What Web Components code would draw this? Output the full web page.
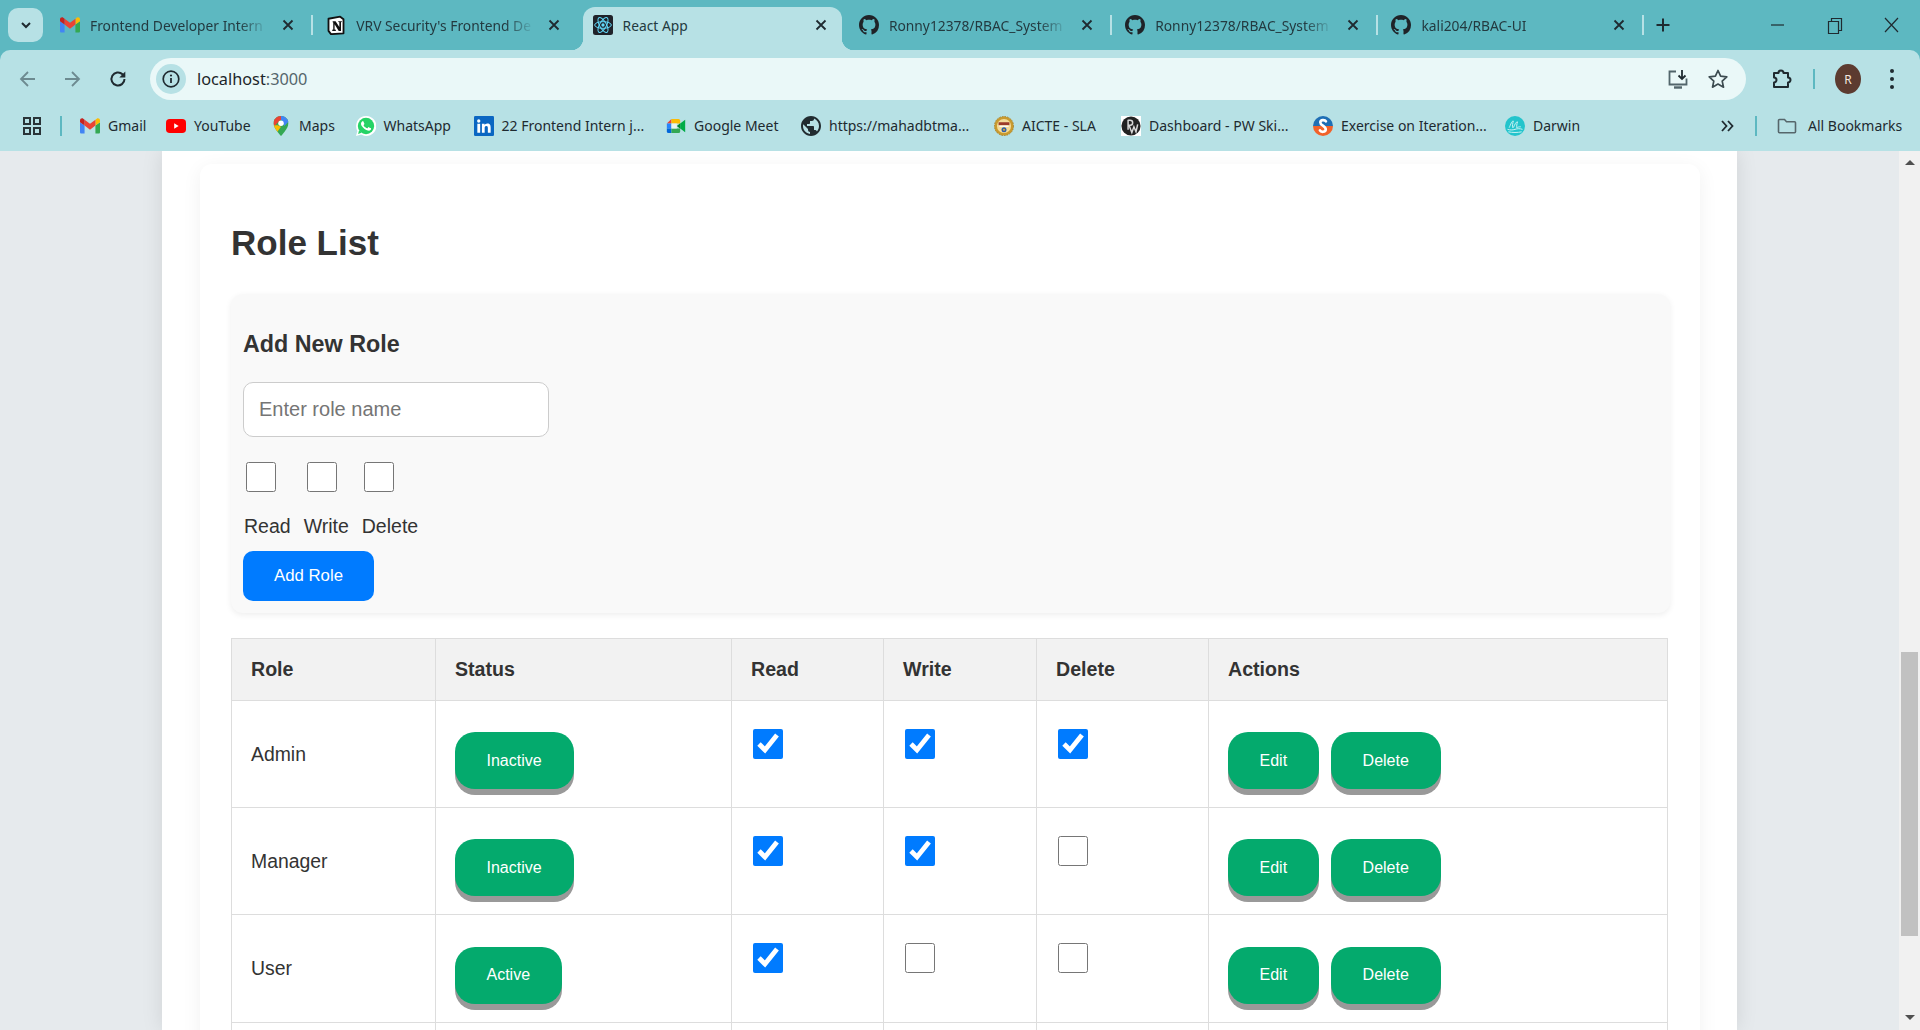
<!DOCTYPE html>
<html lang="en">
<head>
<meta charset="utf-8">
<title>React App</title>
<style>
	html, body { margin: 0; height: 100%; overflow: hidden; }
	body { display: flex; flex-direction: column; font-family: "Liberation Sans", Arial, sans-serif; color: #333; background: #e6eaed; }
</style>
</head>
<body>
<browser-chrome>
	<chrome-tab icon="gmail" label="Frontend Developer Intern" sep></chrome-tab>
	<chrome-tab icon="notion" label="VRV Security's Frontend De"></chrome-tab>
	<chrome-tab icon="react" label="React App" active></chrome-tab>
	<chrome-tab icon="github" label="Ronny12378/RBAC_System" sep></chrome-tab>
	<chrome-tab icon="github" label="Ronny12378/RBAC_System" sep></chrome-tab>
	<chrome-tab icon="github" label="kali204/RBAC-UI" sep></chrome-tab>
	<bookmark-item slot="bookmarks" icon="gmail" w="86">Gmail</bookmark-item>
	<bookmark-item slot="bookmarks" icon="youtube" w="105">YouTube</bookmark-item>
	<bookmark-item slot="bookmarks" icon="maps" w="84.5">Maps</bookmark-item>
	<bookmark-item slot="bookmarks" icon="whatsapp" w="118">WhatsApp</bookmark-item>
	<bookmark-item slot="bookmarks" icon="linkedin" w="192.5">22 Frontend Intern j...</bookmark-item>
	<bookmark-item slot="bookmarks" icon="meet" w="135">Google Meet</bookmark-item>
	<bookmark-item slot="bookmarks" icon="globe" w="193">https://mahadbtma...</bookmark-item>
	<bookmark-item slot="bookmarks" icon="aicte" w="127">AICTE - SLA</bookmark-item>
	<bookmark-item slot="bookmarks" icon="pw" w="192">Dashboard - PW Ski...</bookmark-item>
	<bookmark-item slot="bookmarks" icon="scaler" w="192">Exercise on Iteration...</bookmark-item>
	<bookmark-item slot="bookmarks" icon="darwin" w="100">Darwin</bookmark-item>
</browser-chrome>
<page-area>
	<role-page>
		<role-form></role-form>
		<role-table></role-table>
	</role-page>
</page-area>

<script>
const ICONS = {
	gmail: `<svg viewBox="0 -2 24 22"><path fill="#4285f4" d="M1.6 18H5.5V8.5L0 4.4V16.4C0 17.3.7 18 1.6 18z"/><path fill="#34a853" d="M18.5 18h3.9c.9 0 1.6-.7 1.6-1.6V4.4L18.5 8.5z"/><path fill="#fbbc04" d="M18.5 1.4v7.1L24 4.4V2.2C24 .2 21.700-1 20.100.2z"/><path fill="#ea4335" d="M5.500 8.500V1.400L12 6.300l6.500-4.900v7.100L12 13.400z"/><path fill="#c5221f" d="M0 2.200v2.200l5.500 4.100V1.400L3.900.2C2.300-1 0 .2 0 2.200z"/></svg>`,
	notion: `<svg viewBox="0 0 24 24"><path fill="#fff" stroke="#111" stroke-width="2.200" stroke-linejoin="round" d="M3 4.500 17 2l4 3v17l-15 1-3-4z"/><path fill="#111" d="M8 7.500h3.500l4.500 7v-5.800l-1.300-.2V7.500h4.300v1l-1 .2v10.500h-2.700l-5-8v6.200l1.500.3v1.500H7.500v-1.500l1.200-.3V9L8 8.700z"/></svg>`,
	react: `<svg viewBox="0 0 24 24"><rect width="24" height="24" rx="3" fill="#20232a"/><g fill="none" stroke="#61dafb" stroke-width="1.200"><ellipse cx="12" cy="12" rx="10" ry="4"/><ellipse cx="12" cy="12" rx="10" ry="4" transform="rotate(60 12 12)"/><ellipse cx="12" cy="12" rx="10" ry="4" transform="rotate(120 12 12)"/></g><circle cx="12" cy="12" r="2" fill="#61dafb"/></svg>`,
	github: `<svg viewBox="0 0 16 16"><path fill="#1f2328" d="M8 0C3.58 0 0 3.58 0 8c0 3.54 2.29 6.53 5.47 7.59.4.07.55-.17.55-.38 0-.19-.01-.82-.01-1.49-2.01.37-2.53-.49-2.69-.94-.09-.23-.48-.94-.82-1.13-.28-.15-.68-.52-.01-.53.63-.01 1.08.58 1.23.82.72 1.21 1.87.87 2.33.66.07-.52.28-.87.51-1.07-1.78-.2-3.64-.89-3.64-3.95 0-.87.31-1.59.82-2.15-.08-.2-.36-1.02.08-2.12 0 0 .67-.21 2.2.82.64-.18 1.32-.27 2-.27.68 0 1.36.09 2 .27 1.53-1.04 2.2-.82 2.2-.82.44 1.1.16 1.92.08 2.12.51.56.82 1.27.82 2.15 0 3.07-1.87 3.75-3.65 3.95.29.25.54.73.54 1.48 0 1.07-.01 1.93-.01 2.2 0 .21.15.46.55.38A8.013 8.013 0 0016 8c0-4.42-3.58-8-8-8z"/></svg>`,
	youtube: `<svg viewBox="0 0 24 24"><rect x="0" y="3.500" width="24" height="17" rx="4.500" fill="#f00"/><path fill="#fff" d="M9.800 8.800v6.400l5.400-3.200z"/></svg>`,
	maps: `<svg viewBox="0 0 24 24"><defs><clipPath id="pin"><path d="M12 0C6.900 0 3 4 3 8.700 3 14.900 12 24 12 24s9-9.100 9-15.300C21 4 17.100 0 12 0z"/></clipPath></defs><g clip-path="url(#pin)"><rect width="24" height="24" fill="#34a853"/><path fill="#fbbc04" d="M0 11h8l4 2-8 11H0z"/><path fill="#ea4335" d="M0 0h12v4L5 11H0z"/><path fill="#4285f4" d="M12 0h12v4l-8 8-4-8z"/></g><circle cx="12" cy="8.700" r="3.300" fill="#fff"/></svg>`,
	whatsapp: `<svg viewBox="0 0 24 24"><path fill="#fff" d="M12 0a12 12 0 0 0-10.300 18L0 24l6.300-1.700A12 12 0 1 0 12 0z"/><circle cx="12" cy="12" r="9.800" fill="#25d366"/><path fill="#25d366" d="M2.500 21.500l1.200-4.500 3 3z"/><path fill="#fff" d="M17.472 14.382c-.297-.149-1.758-.867-2.030-.967-.273-.099-.471-.148-.670.150-.197.297-.767.966-.940 1.164-.173.199-.347.223-.644.075-.297-.150-1.255-.463-2.390-1.475-.883-.788-1.480-1.761-1.653-2.059-.173-.297-.018-.458.130-.606.134-.133.298-.347.446-.520.149-.174.198-.298.298-.497.099-.198.050-.371-.025-.520-.075-.149-.669-1.612-.916-2.207-.242-.579-.487-.5-.669-.51-.173-.008-.371-.010-.570-.010-.198 0-.520.074-.792.372-.272.297-1.040 1.016-1.040 2.479 0 1.462 1.065 2.875 1.213 3.074.149.198 2.096 3.200 5.077 4.487.709.306 1.262.489 1.694.625.712.227 1.360.195 1.871.118.571-.085 1.758-.719 2.006-1.413.248-.694.248-1.289.173-1.413-.074-.124-.272-.198-.570-.347z"/></svg>`,
	linkedin: `<svg viewBox="0 0 24 24"><rect width="24" height="24" rx="1.500" fill="#0a66c2"/><path fill="#fff" d="M4 9.300h3.400V20H4zM5.700 4a2 2 0 1 1 0 4 2 2 0 0 1 0-4zM9.500 9.300h3.200v1.500c.5-.9 1.600-1.800 3.300-1.800 3.400 0 4 2.200 4 5.100V20h-3.400v-5.200c0-1.300 0-2.900-1.800-2.900s-2 1.400-2 2.800V20H9.500z"/></svg>`,
	meet: `<svg viewBox="0 0 24 24"><path fill="#ea4335" d="M6.500 3.500 1 9h5.500z"/><path fill="#fbbc04" d="M6.500 3.500H15a2 2 0 0 1 2 2V9H6.500z"/><path fill="#2684fc" d="M1 9h5.500v6H1z"/><path fill="#0066da" d="M1 15h5.500v5.500H3a2 2 0 0 1-2-2z"/><path fill="#34a853" d="M6.500 15H17v3.500a2 2 0 0 1-2 2H6.500z"/><path fill="#e8f4f0" d="M6.500 9H13v6H6.500z"/><path fill="#00832d" d="M13 12l4-3.200v6.400z"/><path fill="#00ac47" d="M17 9l6-4.500v15L17 15z"/></svg>`,
	globe: `<svg viewBox="2 2 20 20"><path fill="#222c30" d="M12 2C6.480 2 2 6.480 2 12s4.480 10 10 10 10-4.480 10-10S17.520 2 12 2zm-1 17.930c-3.950-.49-7-3.850-7-7.930 0-.62.080-1.210.21-1.790L9 15v1c0 1.100.9 2 2 2v1.930zm6.900-2.540c-.26-.81-1-1.390-1.900-1.390h-1v-3c0-.55-.45-1-1-1H8v-2h2c.55 0 1-.45 1-1V7h2c1.100 0 2-.9 2-2v-.41c2.930 1.190 5 4.060 5 7.410 0 2.080-.8 3.970-2.100 5.390z"/></svg>`,
	aicte: `<svg viewBox="0 0 24 24"><circle cx="12" cy="12" r="11.500" fill="#c99a2e" stroke="#a67a1c" stroke-width="1" stroke-dasharray="2 1.200"/><circle cx="12" cy="12" r="8.500" fill="#f4dc9a"/><rect x="5.500" y="7.500" width="13" height="3.500" fill="#9c3b2a"/><rect x="6.500" y="11.500" width="11" height="1.500" fill="#fff"/><circle cx="12" cy="16.500" r="3" fill="#2f5fa8"/><circle cx="12" cy="16.500" r="1.300" fill="#e2a92a"/></svg>`,
	pw: `<svg viewBox="0 0 24 24"><rect width="24" height="24" fill="#fff"/><circle cx="12" cy="12" r="11.500" fill="#222"/><path fill="none" stroke="#d8d8d8" stroke-width="1.800" d="M8.500 4.500v12M8.500 5h2.500a3 3 0 0 1 0 6H8.500M10 12l3 8 2.500-7 2.500 6 2-9"/></svg>`,
	scaler: `<svg viewBox="0 0 24 24"><defs><clipPath id="sc"><circle cx="12" cy="12" r="12"/></clipPath></defs><g clip-path="url(#sc)"><rect width="24" height="12" fill="#1f6fb5"/><rect y="12" width="24" height="12" fill="#f2622a"/></g><path fill="none" stroke="#fff" stroke-width="3.200" stroke-linecap="round" d="M15.500 6.500C14.500 4.500 9 4 8.800 7.600c-.2 3.800 6.700 4.200 6.500 8.500-.2 3.700-5.800 3.500-7 1.200"/></svg>`,
	darwin: `<svg viewBox="0 0 24 24"><circle cx="12" cy="12" r="12" fill="#23c4cc"/><path fill="none" stroke="#c8f3f4" stroke-width="1.200" d="M3 16c3 1 6 1 9 0s6-1 9 0M5 14c2-4 3-8 5-8-1 3-1 6-1 8M10 14c2-4 3-7 5-7-1 3-1 5-1 7 2-1 3-1 5-1M4 19c5 1 11 1 16 0"/></svg>`,
};

function iconSvg(name) {
	return ICONS[name] || "";
}

class ChromeTab extends HTMLElement {
	constructor() {
		super();
		this.attachShadow({ mode: "open" });
		this.shadowRoot.innerHTML = `
			<style>
				:host { display: block; position: relative; flex: 0 0 266.3px; height: 43px; box-sizing: border-box; }
				.row { position: relative; height: 36px; display: flex; align-items: center; padding-left: 10px; }
				.ico { width: 20px; height: 20px; flex: none; }
				.ico svg { display: block; width: 100%; height: 100%; }
				.txt { margin-left: 10px; width: 178px; white-space: nowrap; font: 13.800px "Noto Sans", sans-serif; color: #233a40;
					-webkit-mask-image: linear-gradient(90deg, #000 84%, transparent 100%); mask-image: linear-gradient(90deg, #000 84%, transparent 100%); }
				.x { margin-left: 11px; width: 18px; height: 18px; flex: none; }
				:host([active]) .bg { position: absolute; left: 0; top: 0; bottom: 0; width: 259px; background: #b7e1e5; border-radius: 12px 12px 0 0; }
				:host([active]) .bg::before, :host([active]) .bg::after { content: ""; position: absolute; bottom: 0; width: 12px; height: 12px; }
				:host([active]) .bg::before { left: -12px; background: radial-gradient(circle at 0 0, transparent 12px, #b7e1e5 12.500px); }
				:host([active]) .bg::after { right: -12px; background: radial-gradient(circle at 100% 0, transparent 12px, #b7e1e5 12.500px); }
				:host([active]) .txt { -webkit-mask-image: none; mask-image: none; }
				:host([sep])::after { content: ""; position: absolute; left: 261px; top: 8px; height: 20px; width: 2px; background: #b7e1e5; }
			</style>
			<div class="bg"></div>
			<div class="row">
				<span class="ico">${iconSvg(this.getAttribute("icon"))}</span>
				<span class="txt">${this.getAttribute("label")}</span>
				<svg class="x" viewBox="0 0 18 18"><path d="M4.500 4.500l9 9m0-9l-9 9" stroke="#1f2a30" stroke-width="1.800" fill="none"/></svg>
			</div>`;
	}
}
customElements.define("chrome-tab", ChromeTab);

class BookmarkItem extends HTMLElement {
	constructor() {
		super();
		this.attachShadow({ mode: "open" });
		this.shadowRoot.innerHTML = `
			<style>
				:host { display: flex; align-items: center; gap: 8px; flex: none; white-space: nowrap; width: ${this.getAttribute("w")}px; font: 14px "Noto Sans", sans-serif; color: #1e2a30; }
				.ico { width: 20px; height: 20px; flex: none; }
				.ico svg { display: block; width: 100%; height: 100%; }
			</style>
			<span class="ico">${iconSvg(this.getAttribute("icon"))}</span><slot></slot>`;
	}
}
customElements.define("bookmark-item", BookmarkItem);

class BrowserChrome extends HTMLElement {
	constructor() {
		super();
		this.attachShadow({ mode: "open" });
		this.shadowRoot.innerHTML = `
			<style>
				:host { display: block; flex: none; background: #5db8c1; font-family: "Noto Sans", sans-serif; }
				svg { display: block; }
				.strip { height: 50px; display: flex; align-items: flex-start; box-sizing: border-box; padding-top: 7px; }
				.chev { flex: none; margin: 1px 7px 0 8px; width: 35px; height: 34px; border-radius: 10px; background: #b7e1e5; display: grid; place-items: center; }
				.plus { flex: none; margin: 5px 0 0 2px; width: 26px; height: 26px; }
				.win { margin-left: auto; margin-top: -7px; display: flex; }
				.win svg { width: 57px; height: 50px; }
				.bar { height: 50px; background: #b7e1e5; border-radius: 10px 10px 0 0; box-sizing: border-box; padding-top: 8px; display: flex; align-items: center; }
				.nav { flex: none; width: 45px; height: 42px; display: grid; place-items: center; }
				.omni { flex: none; width: 1596px; height: 42px; margin-left: 10px; border-radius: 21px; background: #eaf8f8; display: flex; align-items: center; box-sizing: border-box; padding: 0 14.500px 0 6px; }
				.chip { width: 30px; height: 30px; border-radius: 50%; background: #b7e1e5; display: grid; place-items: center; flex: none; }
				.url { margin-left: 11px; font-size: 16.300px; color: #1c2529; }
				.url span { color: #55666c; }
				.acts { margin-left: auto; display: flex; gap: 11.500px; }
				.puzzle { margin-left: 14px; width: 42px; display: grid; place-items: center; }
				.vsep { flex: none; width: 2px; height: 20px; background: #5db8c1; }
				.avatar { flex: none; margin-left: 20px; width: 26px; height: 30px; border-radius: 50%; background: #5c3b30; color: #f4e6df; font-size: 12px; display: grid; place-items: center; }
				.menu { flex: none; margin-left: 17px; width: 28px; display: grid; place-items: center; }
				.marks { height: 51px; background: #b7e1e5; display: flex; align-items: center; }
				.grid { flex: none; margin-left: 22px; }
				.marks .vsep { margin-left: 18px; margin-right: 18px; }
				.right { margin-left: auto; display: flex; align-items: center; }
				.right .vsep { margin: 0 20px 0 18px; }
				.all { margin-left: 11px; width: 96px; margin-right: 16px; white-space: nowrap; font-size: 14px; color: #1e2a30; }
			</style>
			<div class="strip">
				<div class="chev"><svg width="14" height="14" viewBox="0 0 14 14"><path d="M3 5l4 4 4-4" fill="none" stroke="#1f2a30" stroke-width="2"/></svg></div>
				<slot></slot>
				<svg class="plus" viewBox="0 0 26 26"><path d="M13 6.500v13M6.500 13h13" stroke="#1f2a30" stroke-width="2"/></svg>
				<div class="win">
					<svg viewBox="0 0 57 50"><path d="M22 25h13" stroke="#1f2a30" stroke-width="1.200"/></svg>
					<svg viewBox="0 0 57 50"><path d="M22.500 21.500h10v12h-10zM25.500 21.500v-3h10v12h-3" fill="none" stroke="#1f2a30" stroke-width="1.200"/></svg>
					<svg viewBox="0 0 57 50"><path d="M22 18l13 14m0-14L22 32" stroke="#1f2a30" stroke-width="1.200"/></svg>
				</div>
			</div>
			<div class="bar">
				<div class="nav" style="margin-left:5px"><svg width="22" height="22" viewBox="0 0 22 22"><path d="M18 11H5m6-7l-7 7 7 7" fill="none" stroke="#6d8a90" stroke-width="1.800"/></svg></div>
				<div class="nav"><svg width="22" height="22" viewBox="0 0 22 22" style="margin-left:-1px"><path d="M4 11h13m-6-7l7 7-7 7" fill="none" stroke="#6d8a90" stroke-width="1.800"/></svg></div>
				<div class="nav"><svg width="22" height="22" viewBox="0 0 22 22"><path d="M17.500 11a6.500 6.500 0 1 1-2-4.700L17.500 8.300" fill="none" stroke="#1f2a30" stroke-width="2"/><path d="M18.300 3.500v6h-6z" fill="#1f2a30"/></svg></div>
				<div class="omni">
					<div class="chip"><svg width="20" height="20" viewBox="0 0 20 20"><circle cx="10" cy="10" r="7.800" fill="none" stroke="#1f2a30" stroke-width="1.700"/><path d="M10 9v5" stroke="#1f2a30" stroke-width="1.800"/><circle cx="10" cy="6.500" r="1.100" fill="#1f2a30"/></svg></div>
					<div class="url">localhost<span>:3000</span></div>
					<div class="acts">
						<svg width="28" height="28" viewBox="0 0 28 28"><path d="M12 6.500H5.500v13h17v-6" fill="none" stroke="#52656b" stroke-width="1.800"/><path d="M10 22.500h8" stroke="#52656b" stroke-width="2.400"/><path d="M18 5v9m-3.500-3.500L18 14l3.500-3.500" fill="none" stroke="#1f2a30" stroke-width="1.800"/></svg>
						<svg width="28" height="28" viewBox="0 0 28 28"><path d="M14 5.500l2.600 5.700 6.200.7-4.600 4.200 1.300 6.100-5.500-3.100-5.500 3.100 1.300-6.100-4.600-4.200 6.200-.7z" fill="none" stroke="#3c4b50" stroke-width="1.700" stroke-linejoin="round"/></svg>
					</div>
				</div>
				<div class="puzzle"><svg width="24" height="26" viewBox="0 0 24 24"><path d="M5 6h4.500a2.500 2.500 0 0 1 5 0H19v4.500a2.500 2.500 0 0 1 0 5V20H5v-4.500a2.500 2.500 0 0 0 0-5z" fill="none" stroke="#1f2a30" stroke-width="2" stroke-linejoin="round"/></svg></div>
				<div class="vsep" style="margin-left:11px"></div>
				<div class="avatar">R</div>
				<div class="menu"><svg width="6" height="24" viewBox="0 0 6 24"><circle cx="3" cy="4" r="2" fill="#1f2a30"/><circle cx="3" cy="12" r="2" fill="#1f2a30"/><circle cx="3" cy="20" r="2" fill="#1f2a30"/></svg></div>
			</div>
			<div class="marks">
				<svg class="grid" width="20" height="20" viewBox="0 0 20 20"><g fill="none" stroke="#2a3438" stroke-width="2"><rect x="2" y="2" width="6" height="6"/><rect x="12" y="2" width="6" height="6"/><rect x="2" y="12" width="6" height="6"/><rect x="12" y="12" width="6" height="6"/></g></svg>
				<div class="vsep"></div>
				<slot name="bookmarks"></slot>
				<div class="right">
					<svg width="20" height="20" viewBox="0 0 20 20"><path d="M5 5l4.500 5L5 15M11 5l4.500 5L11 15" fill="none" stroke="#1f2a30" stroke-width="1.800"/></svg>
					<div class="vsep"></div>
					<svg width="20" height="20" viewBox="0 0 20 20"><path d="M1.500 4.500a1 1 0 0 1 1-1H7.500l2 2.200h8a1 1 0 0 1 1 1v9a1 1 0 0 1-1 1h-15a1 1 0 0 1-1-1z" fill="none" stroke="#56666b" stroke-width="1.600"/></svg>
					<div class="all">All Bookmarks</div>
				</div>
			</div>`;
	}
}
customElements.define("browser-chrome", BrowserChrome);

class PageArea extends HTMLElement {
	constructor() {
		super();
		this.attachShadow({ mode: "open" });
		this.shadowRoot.innerHTML = `
			<style>
				:host { display: flex; flex: 1; min-height: 0; overflow: hidden; }
				.view { flex: 1; min-width: 0; overflow: hidden; background: #e6eaed; }
				.sheet { width: 1575px; height: 100%; margin: 0 0 0 162px; background: #fff; box-shadow: 0 0 20px rgba(0, 0, 0, 0.1); overflow: hidden; box-sizing: border-box; padding: 13px 37px 0 38px; }
				.bar { flex: none; width: 21px; background: #f1f1f1; display: flex; flex-direction: column; align-items: center; }
				.up { margin-top: 9px; border: solid transparent; border-width: 0 5px 5px; border-bottom-color: #505050; }
				.thumb { margin-top: 487px; width: 17px; height: 284px; background: #c1c1c1; }
				.down { margin-top: 79px; border: solid transparent; border-width: 5px 5px 0; border-top-color: #505050; }
			</style>
			<div class="view"><div class="sheet"><slot></slot></div></div>
			<div class="bar"><div class="up"></div><div class="thumb"></div><div class="down"></div></div>`;
	}
}
customElements.define("page-area", PageArea);

class RolePage extends HTMLElement {
	constructor() {
		super();
		this.attachShadow({ mode: "open" });
		this.shadowRoot.innerHTML = `
			<style>
				:host { display: block; width: 1500px; box-sizing: border-box; padding: 0 30px 30px; border-radius: 12px; background: #fff; box-shadow: 0 4px 20px rgba(0, 0, 0, 0.06); }
				h2 { margin: 0; padding: 59px 0 0 1px; height: 130px; box-sizing: border-box; font-size: 35px; line-height: 40px; font-weight: bold; color: #333; }
			</style>
			<h2>Role List</h2>
			<slot></slot>`;
	}
}
customElements.define("role-page", RolePage);

class PushButton extends HTMLElement {
	constructor() {
		super();
		this.attachShadow({ mode: "open" });
		this.shadowRoot.innerHTML = `
			<style>
				:host { display: inline-block; }
				button { display: block; height: 57px; padding: 0 32px 0 31.500px; border: 0; border-radius: 20px; background: #04aa6d; color: #fff; font: 16px "Liberation Sans", Arial, sans-serif; box-shadow: 0 6px 0 #999; }
			</style>
			<button><slot></slot></button>`;
	}
}
customElements.define("push-button", PushButton);

class PermField extends HTMLElement {
	constructor() {
		super();
		this.attachShadow({ mode: "open" });
		this.shadowRoot.innerHTML = `
			<style>
				:host { display: flex; flex-direction: column; align-items: flex-start; }
				input { width: 30px; height: 30px; margin: 0 0 0 ${this.getAttribute("inset")}px; }
				span { margin-top: 22px; font-size: 19.500px; line-height: 24px; color: #333; }
			</style>
			<input type="checkbox"><span>${this.getAttribute("label")}</span>`;
	}
}
customElements.define("perm-field", PermField);

class RoleForm extends HTMLElement {
	constructor() {
		super();
		this.attachShadow({ mode: "open" });
		this.shadowRoot.innerHTML = `
			<style>
				:host { display: block; box-sizing: border-box; height: 319px; margin-left: 1px; padding: 34px 12px 0; border-radius: 12px; background: #f9f9f9; box-shadow: 0 2px 6px rgba(0, 0, 0, 0.07); }
				h3 { margin: 0; font-size: 23.300px; line-height: 32px; font-weight: bold; color: #333; }
				input.name { display: block; box-sizing: border-box; width: 306px; height: 55px; margin-top: 22px; padding: 0 15px; border: 1px solid #ccc; border-radius: 10px; background: #fff; font: 20px "Liberation Sans", Arial, sans-serif; outline: 0; }
				input.name::placeholder { color: #757575; opacity: 1; }
				.perms { display: flex; gap: 13px; margin-top: 25px; margin-left: 1px; }
				button { display: block; width: 131px; height: 50px; margin-top: 13px; border: 0; border-radius: 10px; background: #007bff; color: #fff; font: 16.800px "Liberation Sans", Arial, sans-serif; padding: 0; }
			</style>
			<h3>Add New Role</h3>
			<input class="name" type="text" placeholder="Enter role name">
			<div class="perms">
				<perm-field label="Read" inset="2"></perm-field>
				<perm-field label="Write" inset="3"></perm-field>
				<perm-field label="Delete" inset="2"></perm-field>
			</div>
			<button>Add Role</button>`;
	}
}
customElements.define("role-form", RoleForm);

const ROLES = [
	{ name: "Admin", status: "Inactive", read: true, write: true, del: true },
	{ name: "Manager", status: "Inactive", read: true, write: true, del: false },
	{ name: "User", status: "Active", read: true, write: false, del: false },
];

class RoleTable extends HTMLElement {
	constructor() {
		super();
		this.attachShadow({ mode: "open" });
		const box = (on) => `<td class="c"><input type="checkbox" ${on ? "checked" : ""}></td>`;
		const rows = ROLES.map((r) => `
			<tr>
				<td class="name">${r.name}</td>
				<td class="b"><push-button>${r.status}</push-button></td>
				${box(r.read)}${box(r.write)}${box(r.del)}
				<td class="b"><push-button>Edit</push-button><push-button style="margin-left:12px">Delete</push-button></td>
			</tr>`).join("");
		this.shadowRoot.innerHTML = `
			<style>
				:host { display: block; margin-top: 25px; margin-left: 1px; }
				table { width: 1437px; table-layout: fixed; border-collapse: collapse; font-size: 19.400px; color: #333; }
				th, td { border: 1px solid #ddd; padding: 0 19px; text-align: left; box-sizing: border-box; }
				th { height: 61.500px; background: #f2f2f2; font-size: 19.600px; font-weight: bold; }
				td { height: 107.400px; vertical-align: top; }
				td.name { vertical-align: middle; padding-top: 1px; }
				td.b { padding-top: 31.500px; }
				td.c { padding-top: 28px; padding-left: 21px; }
				td.c input { display: block; width: 30px; height: 30px; margin: 0; accent-color: #007bff; }
			</style>
			<table>
				<colgroup><col style="width:204px"><col style="width:296px"><col style="width:152px"><col style="width:153px"><col style="width:172px"><col></colgroup>
				<thead><tr><th>Role</th><th>Status</th><th>Read</th><th>Write</th><th>Delete</th><th>Actions</th></tr></thead>
				<tbody>${rows}
					<tr><td></td><td></td><td></td><td></td><td></td><td></td></tr>
				</tbody>
			</table>`;
	}
}
customElements.define("role-table", RoleTable);
</script>
</body>
</html>
